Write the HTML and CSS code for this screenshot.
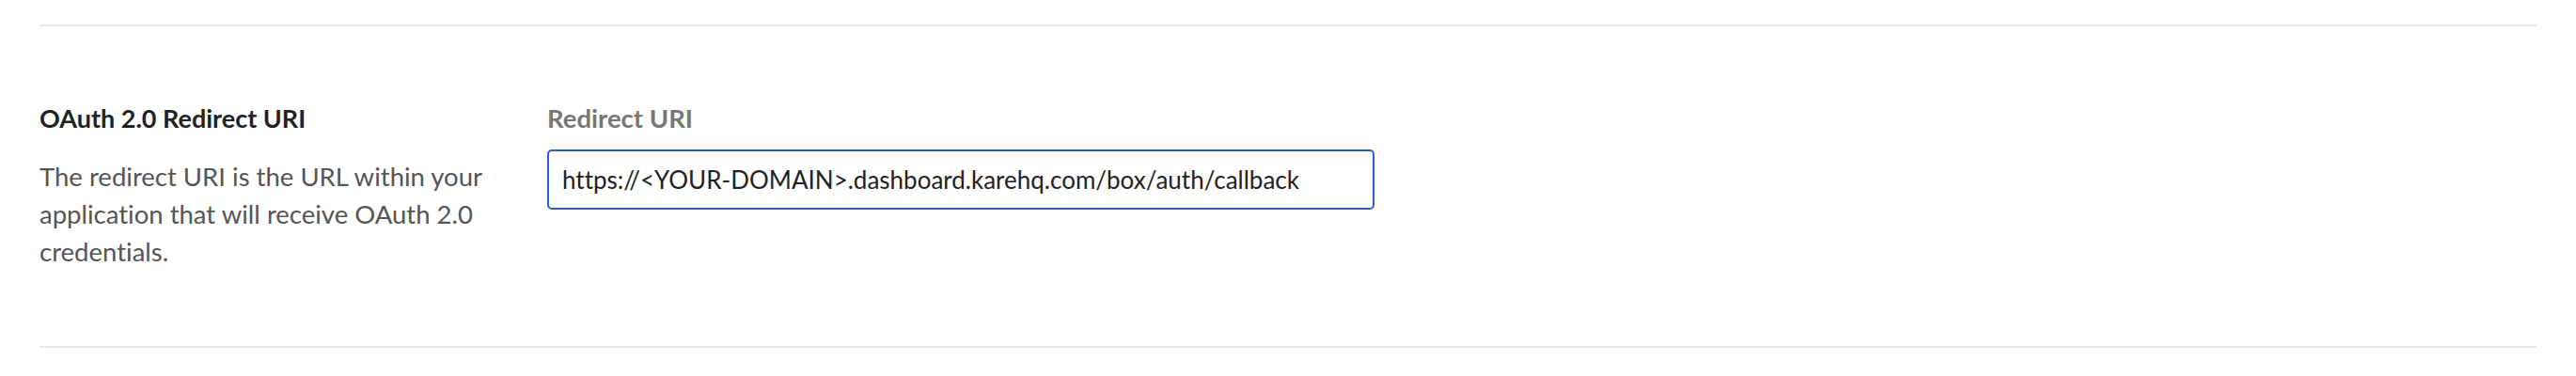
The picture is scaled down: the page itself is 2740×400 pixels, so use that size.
FILE: index.html
```html
<!DOCTYPE html>
<html lang="en">
<head>
<meta charset="utf-8">
<title>OAuth 2.0 Redirect URI</title>
<link rel="stylesheet" href="styles.css">
</head>
<body>
<div class="page">
  <hr class="divider">
  <section class="setting">
    <div class="setting-info">
      <h3 class="setting-title">OAuth 2.0 Redirect URI</h3>
      <p class="setting-desc">The redirect URI is the URL within your application that will receive OAuth 2.0 credentials.</p>
    </div>
    <div class="setting-field">
      <label class="field-label" for="redirect">Redirect URI</label>
      <input class="field-input" id="redirect" type="text" value="https://&lt;YOUR-DOMAIN&gt;.dashboard.karehq.com/box/auth/callback" readonly>
    </div>
  </section>
  <hr class="divider">
</div>
</body>
</html>
```

FILE: styles.css
```css
html, body {
  margin: 0;
  padding: 0;
  background: #ffffff;
}

body {
  font-family: Lato, "Open Sans", "Liberation Sans", sans-serif;
  color: #222222;
  font-variant-ligatures: no-common-ligatures;
}

.page {
  padding: 26px 42px 0;
}

.divider {
  margin: 0;
  border: 0;
  height: 2px;
  background: #e6e6e6;
}

.setting {
  display: flex;
  align-items: flex-start;
  padding: 80px 0 80px;
}

.setting-info {
  width: 500px;
  margin-right: 40px;
}

.setting-title {
  margin: 0;
  font-size: 27px;
  line-height: 36px;
  font-weight: 700;
  color: #222222;
}

.setting-desc {
  margin: 24px 0 0;
  font-size: 27.5px;
  line-height: 40px;
  color: #555555;
}

.setting-field {
  display: flex;
  flex-direction: column;
}

.field-label {
  font-size: 27.5px;
  line-height: 36px;
  font-weight: 700;
  color: #777777;
}

.field-input {
  margin-top: 15px;
  box-sizing: border-box;
  width: 880px;
  height: 64px;
  padding: 0 14px;
  border: 2px solid #2c5ccf;
  border-radius: 5px;
  font-family: Lato, "Open Sans", "Liberation Sans", sans-serif;
  font-size: 26px;
  font-variant-ligatures: no-common-ligatures;
  color: #222222;
  background: #ffffff;
  outline: none;
}
```
